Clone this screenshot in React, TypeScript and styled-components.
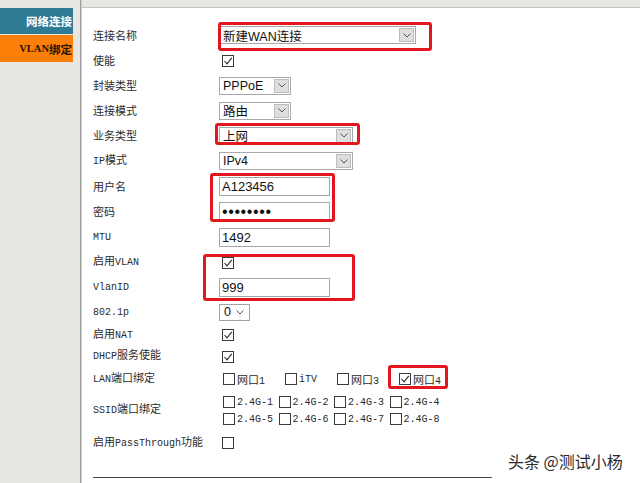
import React from "react";
import styled, { createGlobalStyle } from "styled-components";

const Global = createGlobalStyle`
  html, body { margin: 0; padding: 0; }
  body { width: 640px; height: 483px; overflow: hidden; background: #fff; }
  #root { width: 640px; height: 483px; }
`;

const SANS = `"Noto Sans CJK SC", "Noto Sans", sans-serif`;
const SONG = `"Liberation Mono", "Noto Sans CJK SC", monospace`;
const INPUT = `"Liberation Sans", "Noto Sans CJK SC", sans-serif`;

const Page = styled.div`
  position: relative;
  width: 640px;
  height: 483px;
  display: flex;
  overflow: hidden;
`;

const Sidebar = styled.nav`
  width: 80px;
  flex: none;
  background: #e8e6e2;
  padding-top: 8px;
  display: flex;
  flex-direction: column;
  gap: 1px;
  box-sizing: border-box;
`;

const Tab = styled.div<{ $active?: boolean }>`
  width: 73px;
  height: ${(p) => (p.$active ? 27 : 26)}px;
  flex: none;
  box-sizing: border-box;
  display: flex;
  align-items: center;
  justify-content: flex-end;
  padding-right: 1px;
  font-family: ${SANS};
  font-weight: 700;
  font-size: 11.5px;
  background: ${(p) => (p.$active ? "#fb7f08" : "#2f7b93")};
  color: ${(p) => (p.$active ? "#2a1300" : "#ffffff")};
`;

const TabLat = styled.span`
  font-family: "Liberation Serif", serif;
  font-weight: 700;
  font-size: 10.5px;
`;

const Divider = styled.div`
  width: 2px;
  flex: none;
  border-left: 1px solid #9d9d9d;
  background: #cfcfcf;
  box-sizing: border-box;
`;

const Main = styled.div`
  flex: 1;
  display: flex;
  flex-direction: column;
`;

const TopBar = styled.div`
  height: 7px;
  flex: none;
  background: #e8e6e2;
  border-bottom: 1px solid #c6c4c0;
`;

const Panel = styled.main`
  flex: 1;
  background: #ffffff;
  padding: 14px 0 0 11px;
  display: flex;
  flex-direction: column;
`;

const Row = styled.div<{ $h: number }>`
  flex: none;
  display: grid;
  grid-template-columns: 126px 1fr;
  align-items: center;
  height: ${(p) => p.$h}px;
`;

const Label = styled.div<{ $song?: boolean }>`
  font-family: ${(p) => (p.$song ? SONG : SANS)};
  font-size: 11px;
  color: #2b2b2b;
  white-space: nowrap;
  line-height: 1;
`;

const Lat = styled.span`
  font-family: "Liberation Mono", monospace;
  font-size: 10px;
`;

const SelectBox = styled.div<{ $w: number }>`
  width: ${(p) => p.$w}px;
  height: 18px;
  box-sizing: border-box;
  border: 1px solid #a9a9a9;
  background: #fff;
  display: flex;
  align-items: stretch;
`;

const SelectText = styled.span`
  flex: 1;
  padding-left: 3px;
  display: flex;
  align-items: center;
  font-family: ${INPUT};
  font-size: 12.5px;
  color: #111;
  white-space: nowrap;
  overflow: hidden;
`;

const ArrowBox = styled.span`
  width: 15px;
  margin: 1px;
  box-sizing: border-box;
  border: 1px solid #bdbdbd;
  background: #dedede;
  display: flex;
  align-items: center;
  justify-content: center;
`;

const SmallSelect = styled.div`
  width: 31px;
  height: 17px;
  box-sizing: border-box;
  border: 1px solid #a3a3a3;
  display: flex;
  align-items: center;
  justify-content: space-between;
  padding: 0 5px 0 4px;
  font-family: ${INPUT};
  font-size: 12.5px;
  color: #111;
`;

const TextInput = styled.div`
  width: 111px;
  height: 19px;
  box-sizing: border-box;
  border: 1px solid #a6a6a6;
  display: flex;
  align-items: center;
  padding-left: 2px;
  font-family: ${INPUT};
  font-size: 13px;
  color: #111;
`;

const Dots = styled.span`
  font-family: "Liberation Sans", sans-serif;
  font-size: 16px;
  letter-spacing: 0.6px;
  line-height: 1;
`;

const Box = styled.span<{ $inset?: number }>`
  width: 12px;
  height: 12px;
  box-sizing: border-box;
  border: 1px solid #3a3a3a;
  background: #fff;
  display: inline-flex;
  align-items: center;
  justify-content: center;
  margin-left: ${(p) => p.$inset ?? 0}px;
  flex: none;
`;

const Options = styled.div`
  display: flex;
  align-items: center;
  gap: 20px;
  padding-left: 4px;
`;

const Option = styled.label`
  display: inline-flex;
  align-items: center;
  gap: 2px;
  font-family: ${SONG};
  font-size: 11px;
  color: #2b2b2b;
  white-space: nowrap;
`;

const SsidGrid = styled.div`
  display: grid;
  grid-template-columns: repeat(4, 55.5px);
  grid-auto-rows: 17px;
  align-items: center;
  padding-left: 4px;
`;

const Footer = styled.div`
  flex: none;
  height: 22px;
  display: flex;
  align-items: flex-end;
`;

const Rule = styled.div`
  width: 399px;
  height: 1px;
  background: #4a4a4a;
`;

const Mark = styled.div`
  position: absolute;
  border: 3px solid #e3151d;
  border-radius: 3px;
  box-sizing: border-box;
  pointer-events: none;
`;

const Watermark = styled.div`
  position: absolute;
  left: 508px;
  top: 449px;
  font-family: ${SANS};
  font-size: 16px;
  color: #2a2a2a;
  text-shadow: 0 0 2px #fff, 0 0 1px #fff;
  white-space: nowrap;
`;

const Chevron = () => (
  <svg width="8" height="5" viewBox="0 0 8 5">
    <path d="M0.5 0.5 L4 4 L7.5 0.5" fill="none" stroke="#555" strokeWidth="1" />
  </svg>
);

const Check = () => (
  <svg width="10" height="10" viewBox="0 0 10 10">
    <path d="M1.5 5 L4 7.8 L8.8 1.8" fill="none" stroke="#2a2a2a" strokeWidth="1.1" />
  </svg>
);

const Select = ({ w, children }: { w: number; children: React.ReactNode }) => (
  <SelectBox $w={w}>
    <SelectText>{children}</SelectText>
    <ArrowBox>
      <Chevron />
    </ArrowBox>
  </SelectBox>
);

const CheckBox = ({ checked, inset }: { checked?: boolean; inset?: number }) => (
  <Box $inset={inset}>{checked ? <Check /> : null}</Box>
);

const Opt = ({ checked, children }: { checked?: boolean; children: React.ReactNode }) => (
  <Option>
    <CheckBox checked={checked} />
    <span>{children}</span>
  </Option>
);

export default function App() {
  const ssid = [1, 2, 3, 4, 5, 6, 7, 8];
  return (
    <>
      <Global />
      <Page>
        <Sidebar>
          <Tab>网络连接</Tab>
          <Tab $active>
            <TabLat>VLAN</TabLat>绑定
          </Tab>
        </Sidebar>
        <Divider />
        <Main>
          <TopBar />
          <Panel>
            <Row $h={26}>
              <Label>连接名称</Label>
              <Select w={197}>新建WAN连接</Select>
            </Row>
            <Row $h={25}>
              <Label>使能</Label>
              <CheckBox checked inset={3} />
            </Row>
            <Row $h={25}>
              <Label>封装类型</Label>
              <Select w={72}>PPPoE</Select>
            </Row>
            <Row $h={25}>
              <Label>连接模式</Label>
              <Select w={72}>路由</Select>
            </Row>
            <Row $h={25}>
              <Label>业务类型</Label>
              <Select w={134}>上网</Select>
            </Row>
            <Row $h={26}>
              <Label $song>
                <Lat>IP</Lat>模式
              </Label>
              <Select w={134}>IPv4</Select>
            </Row>
            <Row $h={25}>
              <Label>用户名</Label>
              <TextInput>A123456</TextInput>
            </Row>
            <Row $h={25}>
              <Label>密码</Label>
              <TextInput>
                <Dots>••••••••</Dots>
              </TextInput>
            </Row>
            <Row $h={26}>
              <Label $song>
                <Lat>MTU</Lat>
              </Label>
              <TextInput>1492</TextInput>
            </Row>
            <Row $h={25}>
              <Label $song>
                启用<Lat>VLAN</Lat>
              </Label>
              <CheckBox checked inset={3} />
            </Row>
            <Row $h={25}>
              <Label $song>
                <Lat>VlanID</Lat>
              </Label>
              <TextInput>999</TextInput>
            </Row>
            <Row $h={24}>
              <Label $song>
                <Lat>802.1p</Lat>
              </Label>
              <SmallSelect>
                <span>0</span>
                <Chevron />
              </SmallSelect>
            </Row>
            <Row $h={22}>
              <Label $song>
                启用<Lat>NAT</Lat>
              </Label>
              <CheckBox checked inset={3} />
            </Row>
            <Row $h={21}>
              <Label $song>
                <Lat>DHCP</Lat>服务使能
              </Label>
              <CheckBox checked inset={3} />
            </Row>
            <Row $h={24}>
              <Label $song>
                <Lat>LAN</Lat>端口绑定
              </Label>
              <Options>
                <Opt>
                  网口<Lat>1</Lat>
                </Opt>
                <Opt>
                  <Lat>iTV</Lat>
                </Opt>
                <Opt>
                  网口<Lat>3</Lat>
                </Opt>
                <Opt checked>
                  网口<Lat>4</Lat>
                </Opt>
              </Options>
            </Row>
            <Row $h={39}>
              <Label $song>
                <Lat>SSID</Lat>端口绑定
              </Label>
              <SsidGrid>
                {ssid.map((n) => (
                  <Opt key={n}>
                    <Lat>2.4G-{n}</Lat>
                  </Opt>
                ))}
              </SsidGrid>
            </Row>
            <Row $h={26}>
              <Label $song>
                启用<Lat>PassThrough</Lat>功能
              </Label>
              <CheckBox inset={3} />
            </Row>
            <Footer>
              <Rule />
            </Footer>
          </Panel>
        </Main>
        <Mark style={{ left: 218, top: 22, width: 214, height: 29 }} />
        <Mark style={{ left: 215, top: 123, width: 145, height: 22 }} />
        <Mark style={{ left: 210, top: 173, width: 125, height: 49 }} />
        <Mark style={{ left: 203, top: 254, width: 152, height: 47 }} />
        <Mark style={{ left: 388, top: 365, width: 60, height: 24 }} />
        <Watermark>头条 @测试小杨</Watermark>
      </Page>
    </>
  );
}
